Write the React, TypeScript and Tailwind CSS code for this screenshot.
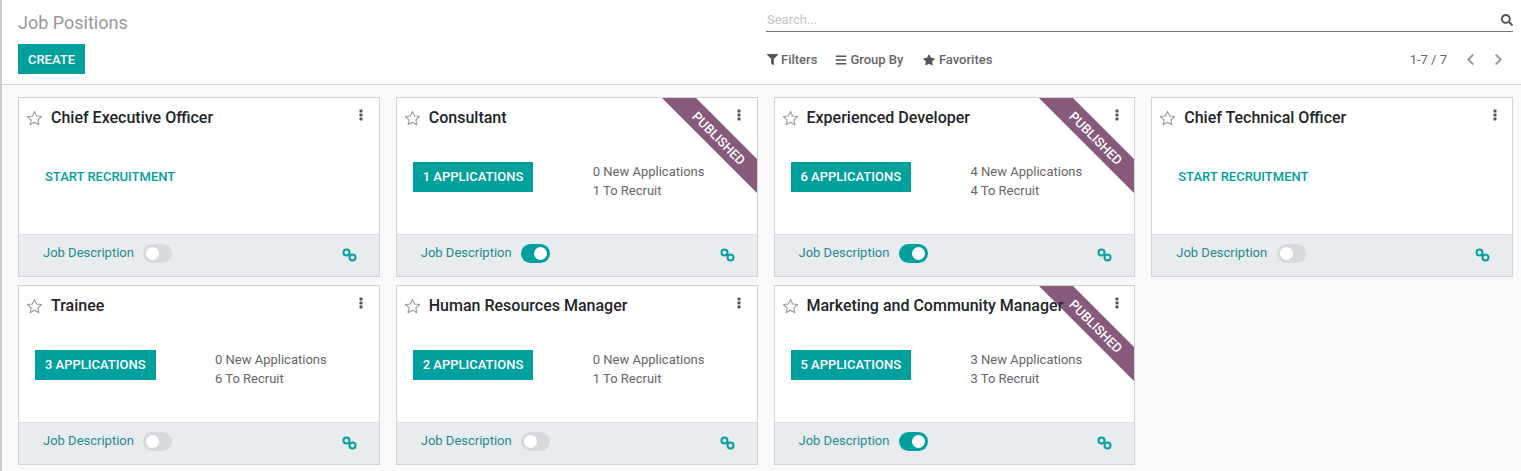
import { FaFilter, FaBars, FaStar, FaSearch, FaChevronLeft, FaChevronRight } from "react-icons/fa";

const jobs = [
  { title: "Chief Executive Officer", apps: 0, fresh: 0, recruit: 0, on: false, pub: false },
  { title: "Consultant", apps: 1, fresh: 0, recruit: 1, on: true, pub: true },
  { title: "Experienced Developer", apps: 6, fresh: 4, recruit: 4, on: true, pub: true },
  { title: "Chief Technical Officer", apps: 0, fresh: 0, recruit: 0, on: false, pub: false },
  { title: "Trainee", apps: 3, fresh: 0, recruit: 6, on: false, pub: false },
  { title: "Human Resources Manager", apps: 2, fresh: 0, recruit: 1, on: false, pub: false },
  { title: "Marketing and Community Manager", apps: 5, fresh: 3, recruit: 3, on: true, pub: true },
];

function StarOutline() {
  return (
    <svg width="17" height="16" viewBox="0 0 24 23" fill="none" stroke="#9a9a9a" strokeWidth="1.600" strokeLinejoin="round">
      <path d="M12 2l3 6.600 7.200.8-5.400 4.800 1.500 7.100L12 17.700l-6.300 3.600 1.500-7.100L1.800 9.400 9 8.600z" />
    </svg>
  );
}

function Kebab() {
  return (
    <svg width="4" height="12" viewBox="0 0 4 12" fill="#555555">
      <rect x="0.500" y="0.500" width="3" height="3" rx="0.800" />
      <rect x="0.500" y="4.500" width="3" height="3" rx="0.800" />
      <rect x="0.500" y="8.500" width="3" height="3" rx="0.800" />
    </svg>
  );
}

function LinkIcon() {
  return (
    <svg width="15" height="15" viewBox="0 0 15 15" fill="none" stroke="#00A09D" strokeWidth="2">
      <circle cx="4.500" cy="4.500" r="3" />
      <circle cx="10.500" cy="9.500" r="3" />
    </svg>
  );
}

function Toggle({ on }: { on: boolean }) {
  return on ? (
    <span className="flex h-[19px] w-[29px] items-center justify-end rounded-full bg-[#00A09D] pr-[3px]">
      <span className="h-[13px] w-[13px] rounded-full bg-white" />
    </span>
  ) : (
    <span className="flex h-[19px] w-[29px] items-center justify-start rounded-full bg-[#d7dadd] pl-[3px]">
      <span className="h-[13px] w-[13px] rounded-full bg-white" />
    </span>
  );
}

function Card({ job }: { job: (typeof jobs)[number] }) {
  return (
    <div className="relative flex h-[180px] flex-col overflow-hidden border border-[#ced4da] bg-white">
      {job.pub && (
        <div className="absolute right-[-38px] top-[27px] flex h-[24px] w-[154px] rotate-45 items-center justify-center bg-[#875A7B] pl-[3px] text-[13px] font-medium uppercase leading-none text-white">
          Published
        </div>
      )}
      <div className="relative flex h-[37px] shrink-0 items-center pl-[7px] pt-[2px]">
        <StarOutline />
        <span className="ml-[8px] whitespace-nowrap text-[16px] font-medium text-[#212529]">{job.title}</span>
        <span className="absolute right-[15.500px] top-[11px]">
          <Kebab />
        </span>
      </div>
      <div className="flex flex-1 items-start pt-[27px]">
        {job.apps > 0 ? (
          <>
            <div className="w-[196px] shrink-0 pl-[16px]">
              <span className="inline-flex h-[30px] w-[120.500px] items-center justify-center bg-[#00A09D] text-[13px] font-medium text-white">
                {job.apps} APPLICATIONS
              </span>
            </div>
            <div className="relative text-[13px] leading-[19px] text-[#666666]">
              <div>{job.fresh} New Applications</div>
              <div>{job.recruit} To Recruit</div>
            </div>
          </>
        ) : (
          <span className="flex h-[30px] items-center pl-[26px] text-[13px] font-medium text-[#00A09D]">START RECRUITMENT</span>
        )}
      </div>
      <div className="flex h-[42px] shrink-0 items-center justify-between border-t border-[#dee2e6] bg-[#e9ecef] pb-[5px] pl-[24px] pr-[22px]">
        <div className="flex items-center gap-[9.500px]">
          <span className="text-[13px] text-[#1f8a8d]">Job Description</span>
          <Toggle on={job.on} />
        </div>
        <span className="mt-[5px]">
          <LinkIcon />
        </span>
      </div>
    </div>
  );
}

export default function App() {
  return (
    <div className="flex h-[471px] w-full overflow-hidden bg-[#f9f9f9] font-['Roboto',sans-serif]">
      <div className="w-[2px] shrink-0 bg-[#cccccc]" />
      <div className="min-w-0 flex-1">
        <header className="flex h-[85px] justify-between border-b border-[#ced4da] bg-white pl-[16px] pr-[8px]">
          <div>
            <div className="pt-[12px] text-[18px] leading-[22px] text-[#999999]">Job Positions</div>
            <div className="mt-[10px] flex h-[30px] w-[67px] items-center justify-center bg-[#00A09D] pt-px text-[13px] font-medium text-white">
              CREATE
            </div>
          </div>
          <div className="w-[747px]">
            <div className="mt-[8px] flex h-[24px] items-center justify-between border-b border-[#777777] pl-px">
              <span className="text-[13px] text-[#c4c4c4]">Search...</span>
              <FaSearch className="text-[12px] text-[#555555]" />
            </div>
            <div className="mt-[18px] flex items-center justify-between text-[13px] text-[#666666]">
              <div className="flex items-center pl-px font-medium">
                <span className="flex items-center gap-[3px]"><FaFilter className="text-[11px] text-[#555555]" />Filters</span>
                <span className="ml-[18px] flex items-center gap-[3px]"><FaBars className="text-[12px] text-[#555555]" />Group By</span>
                <span className="ml-[19.500px] flex items-center gap-[4px]"><FaStar className="text-[12px] text-[#555555]" />Favorites</span>
              </div>
              <div className="flex items-center">
                <span>1-7 / 7</span>
                <FaChevronLeft className="ml-[17px] text-[13px] text-[#9a9a9a]" />
                <FaChevronRight className="ml-[15px] mr-[8px] text-[13px] text-[#9a9a9a]" />
              </div>
            </div>
          </div>
        </header>
        <main className="grid grid-cols-4 gap-x-[16px] gap-y-[8px] pl-[16px] pr-[8px] pt-[12px]">
          {jobs.map((job) => (
            <Card key={job.title} job={job} />
          ))}
        </main>
      </div>
    </div>
  );
}
